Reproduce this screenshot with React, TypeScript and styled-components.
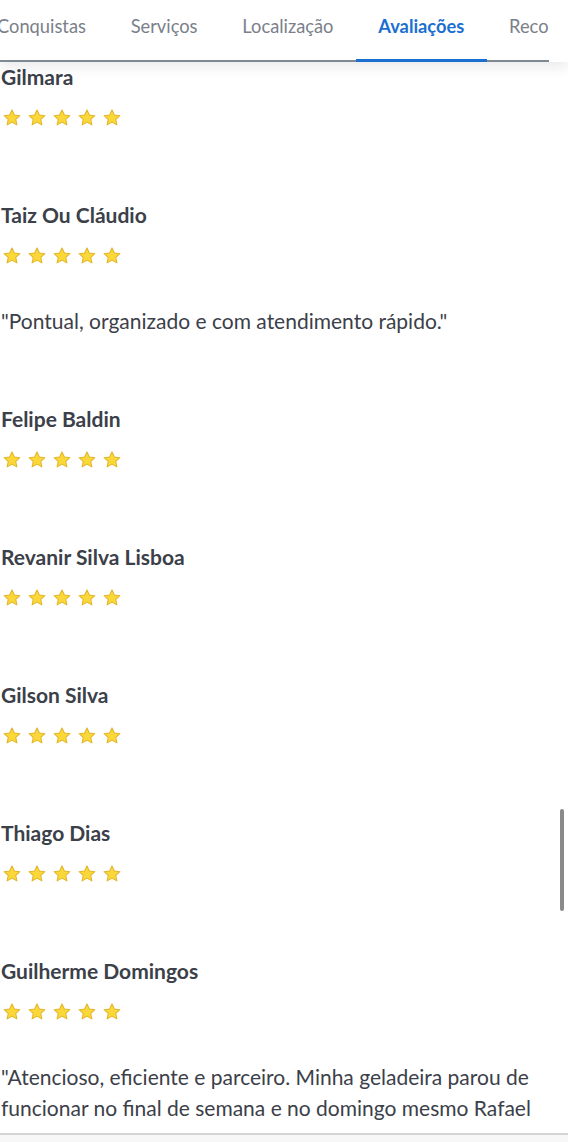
import React from "react";
import styled, { createGlobalStyle } from "styled-components";

const Global = createGlobalStyle`
  html, body { margin: 0; padding: 0; background: #ffffff; }
  body { font-family: "Lato", "Noto Sans", sans-serif; overflow: hidden; }
  * { box-sizing: border-box; }
`;

const Page = styled.div`
  width: 568px;
  height: 1142px;
  position: relative;
  overflow: hidden;
  background: #fff;
`;

const Header = styled.div`
  position: relative;
  z-index: 2;
  height: 62px;
  background: #fff;
  box-shadow: 0 6px 12px rgba(0, 0, 0, 0.08);
  padding-right: 19px;
`;

const Tabs = styled.nav`
  height: 62px;
  display: flex;
  align-items: stretch;
  margin-left: -3px;
  border-bottom: 2px solid #808890;
`;

const Tab = styled.div<{ $active?: boolean }>`
  display: flex;
  align-items: center;
  padding: 0 22.4px 8px;
  margin-bottom: -2px;
  font-size: 18.3px;
  white-space: nowrap;
  color: ${(p) => (p.$active ? "#1a6fd1" : "#7a8089")};
  font-weight: ${(p) => (p.$active ? 700 : 400)};
  border-bottom: 3px solid ${(p) => (p.$active ? "#1a6fd1" : "transparent")};
  &:first-child { padding-left: 0; }
  &:last-child { padding-right: 0; }
`;

const List = styled.div`
  display: flex;
  flex-direction: column;
  padding-left: 1px;
`;

const Card = styled.div`
  display: flex;
  flex-direction: column;
  padding-bottom: 73px;
`;

const Name = styled.div`
  font-size: 21px;
  line-height: 30px;
  font-weight: 700;
  color: #3b4049;
`;

const Stars = styled.div`
  display: flex;
  gap: 7px;
  margin-top: 15px;
  height: 20px;
  align-items: center;
  padding-left: 2px;
`;

const Comment = styled.p`
  margin: 40px 0 -5px;
  font-size: 21px;
  line-height: 31px;
  color: #3b4049;
`;

const Bottom = styled.div`
  position: absolute;
  left: 0;
  right: 0;
  top: 1133px;
  bottom: 0;
  border-top: 2px solid #d4d4d4;
  background: #f7f7f7;
`;

const ScrollThumb = styled.div`
  position: absolute;
  right: 4px;
  top: 809px;
  width: 4px;
  height: 102px;
  border-radius: 2px;
  background: #8a8a8a;
`;

const Star = () => (
  <svg width="18" height="17" viewBox="0 0 24 23">
    <path
      d="M12 1.2l3.2 6.9 7.5.9-5.6 5.1 1.5 7.4L12 17.8 5.4 21.5l1.5-7.4L1.3 9l7.5-.9z"
      fill="#fbd83a"
      stroke="#e2b52a"
      strokeWidth="1.4"
      strokeLinejoin="round"
    />
  </svg>
);

const reviews: { name: string; comment?: string }[] = [
  { name: "Gilmara" },
  { name: "Taiz Ou Cláudio", comment: "\"Pontual, organizado e com atendimento rápido.\"" },
  { name: "Felipe Baldin" },
  { name: "Revanir Silva Lisboa" },
  { name: "Gilson Silva" },
  { name: "Thiago Dias" },
  {
    name: "Guilherme Domingos",
    comment:
      "\"Atencioso, eficiente e parceiro. Minha geladeira parou de funcionar no final de semana e no domingo mesmo Rafael",
  },
];

const tabs = ["Conquistas", "Serviços", "Localização", "Avaliações", "Reco"];

export default function App() {
  return (
    <Page>
      <Global />
      <Header>
        <Tabs>
          {tabs.map((t) => (
            <Tab key={t} $active={t === "Avaliações"}>
              {t}
            </Tab>
          ))}
        </Tabs>
      </Header>
      <List>
        {reviews.map((r) => (
          <Card key={r.name}>
            <Name>{r.name}</Name>
            <Stars>
              {[0, 1, 2, 3, 4].map((i) => (
                <Star key={i} />
              ))}
            </Stars>
            {r.comment && <Comment>{r.comment}</Comment>}
          </Card>
        ))}
      </List>
      <Bottom />
      <ScrollThumb />
    </Page>
  );
}
